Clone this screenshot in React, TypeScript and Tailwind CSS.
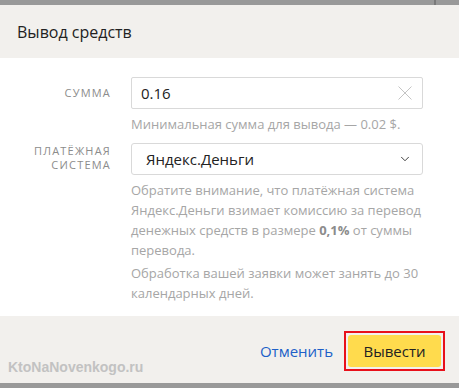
import { ChevronDown } from "lucide-react";

export default function App() {
    return (
        <div className="w-[459px] h-[388px] flex flex-col bg-white font-['Open_Sans',sans-serif] overflow-hidden">
            {/* Top strip */}
            <div className="h-[5px] bg-[#999999] flex justify-end shrink-0">
                <div className="w-[2px] h-full bg-[#7a7a7a] mr-[23px]" />
            </div>

            {/* Header */}
            <div className="h-[53px] bg-[#f2f0ed] flex items-center px-[17px] shrink-0">
                <h1 className="text-[16px] text-[#222] leading-none">Вывод средств</h1>
            </div>

            {/* Body */}
            <div className="flex-1 pt-[19px]">
                <div className="flex">
                    <div className="w-[111px] text-right text-[11px] tracking-[1.2px] text-[#8c8c8c] pt-[9px] leading-[13px]">
                        СУММА
                    </div>
                    <div className="ml-[20px] w-[292px]">
                        <div className="h-[32px] border border-[#d9d9d9] rounded-[2px] flex items-center pl-[9px] pr-[9px]">
                            <span className="flex-1 text-[15px] text-[#222]">0.16</span>
                            <svg width="14" height="14" viewBox="0 0 14 14" className="mr-[1px]">
                                <path d="M0.5 0.5 L13.5 13.5 M13.5 0.5 L0.5 13.5" stroke="#c4c4c4" strokeWidth="1" fill="none" />
                            </svg>
                        </div>
                        <p className="text-[13px] text-[#a6a6a6] mt-[6px] leading-[18px]">
                            Минимальная сумма для вывода — 0.02 $.
                        </p>
                    </div>
                </div>

                <div className="flex mt-[10px]">
                    <div className="w-[111px] text-right text-[11px] tracking-[1.2px] text-[#8c8c8c] pt-[1px] leading-[14px]">
                        ПЛАТЁЖНАЯ
                        <br />
                        СИСТЕМА
                    </div>
                    <div className="ml-[20px] w-[292px]">
                        <div className="h-[32px] border border-[#d9d9d9] rounded-[3px] flex items-center pl-[14px] pr-[10px]">
                            <span className="flex-1 text-[15px] text-[#222]">Яндекс.Деньги</span>
                            <ChevronDown className="w-[14px] h-[14px] text-[#333]" strokeWidth={1.6} />
                        </div>
                        <p className="text-[13px] text-[#a6a6a6] mt-[5px] leading-[20px]">
                            Обратите внимание, что платёжная система Яндекс.Деньги взимает комиссию за перевод
                            денежных средств в размере <b className="text-[#8c8c8c]">0,1%</b> от суммы перевода.
                        </p>
                        <p className="text-[13px] text-[#a6a6a6] mt-[3px] leading-[20px]">
                            Обработка вашей заявки может занять до 30 календарных дней.
                        </p>
                    </div>
                </div>
            </div>

            {/* Footer */}
            <div className="h-[67px] bg-[#f2f0ed] relative flex items-center justify-end pr-[14px] pt-[3px] shrink-0">
                <span className="absolute left-[8px] bottom-[5px] text-[14px] font-bold text-[#c2c2c2] font-['Liberation_Sans',sans-serif]">
                    KtoNaNovenkogo.ru
                </span>
                <button className="text-[15px] text-[#2060c8] mr-[11px]">Отменить</button>
                <div className="border-2 border-[#e8101a] p-[2px]">
                    <button className="w-[93px] h-[32px] bg-[#ffdb4d] rounded-[3px] text-[15px] text-[#222]">
                        Вывести
                    </button>
                </div>
            </div>

            {/* Bottom strip */}
            <div className="h-[5px] bg-[#999999] shrink-0" />
        </div>
    );
}
